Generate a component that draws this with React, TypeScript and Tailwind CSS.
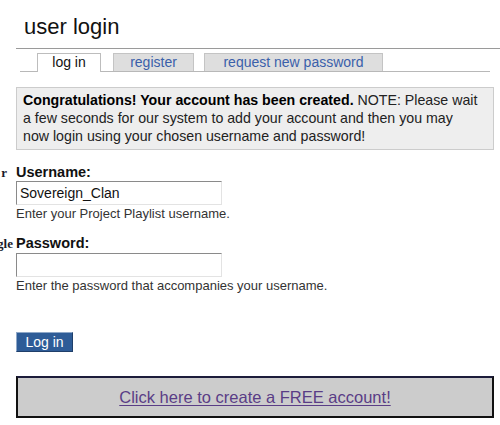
export default function App() {
  return (
    <div className="w-[500px] h-[425px] bg-white overflow-hidden font-['Liberation_Sans',Arial,sans-serif] text-black">
      {/* Title */}
      <div className="pl-[24px] pt-[14px] h-[48px] text-[22px] leading-[26px] text-[#111]">user login</div>
      <div className="ml-[16px] h-[1px] bg-[#9a9a9a]" />

      {/* Tabs */}
      <div className="ml-[20px] mr-[10px] mt-[4px] flex pl-[17px] border-b border-[#b8b8b8] h-[19px]">
        <div className="w-[64px] h-[19px] bg-white border border-b-0 border-[#bdbdbd] text-[14px] leading-[17px] text-center text-[#111]">
          log in
        </div>
        <div className="ml-[12px] w-[81px] h-[18px] bg-[#dedede] border border-b-0 border-[#c4c4c4] text-[14px] leading-[17px] text-center text-[#3a60aa]">
          register
        </div>
        <div className="ml-[10px] w-[179px] h-[18px] bg-[#dedede] border border-b-0 border-[#c4c4c4] text-[14px] leading-[17px] text-center text-[#3a60aa]">
          request new password
        </div>
      </div>

      {/* Message */}
      <div className="ml-[16px] w-[478px] mt-[15px] bg-[#eeeeee] border border-[#cccccc] px-[6px] pt-[3px] pb-[4px] text-[14.2px] leading-[18px] text-[#222]">
        <span className="font-bold text-black">Congratulations! Your account has been created.</span> NOTE: Please wait
        <br />
        a few seconds for our system to add your account and then you may
        <br />
        now login using your chosen username and password!
      </div>

      {/* Form */}
      <div className="flex mt-[14px]">
        <div className="w-[16px] shrink-0 overflow-hidden font-['Liberation_Serif',serif] text-[13px] font-bold text-[#1a1a2a]">
          <div className="h-[71px] flex justify-end pr-[9px] leading-[17px]">r</div>
          <div className="flex justify-end pr-[3px] leading-[17px] whitespace-nowrap">gle</div>
        </div>
        <div className="flex flex-col">
          <div className="text-[14.5px] leading-[17px] font-bold text-[#111]">Username:</div>
          <div className="w-[206px] h-[24px] border border-[#e3e3e3] border-t-[#8a8a8a] border-l-[#8a8a8a] pl-[3px] text-[14px] leading-[22px] text-[#111]">
            Sovereign_Clan
          </div>
          <div className="mt-[2px] text-[13px] leading-[14px] text-[#333]">Enter your Project Playlist username.</div>

          <div className="mt-[14px] text-[14.5px] leading-[17px] font-bold text-[#111]">Password:</div>
          <div className="mt-[1px] w-[206px] h-[24px] border border-[#e3e3e3] border-t-[#8a8a8a] border-l-[#8a8a8a]" />
          <div className="mt-[2px] text-[13px] leading-[14px] text-[#333]">Enter the password that accompanies your username.</div>

          <button className="mt-[39px] w-[57px] h-[20px] bg-[#2e5c97] border border-[#8fa8c8] border-r-[#1f3f6a] border-b-[#1f3f6a] text-white text-[14px] leading-[16px] font-['Liberation_Sans',Arial,sans-serif]">
            Log in
          </button>
        </div>
      </div>

      {/* Create account */}
      <div className="ml-[16px] mt-[24px] w-[478px] h-[42px] bg-[#cccccc] border-2 border-[#111] border-t-[#1c1c3a] flex items-center justify-center">
        <a className="text-[16.5px] leading-[18px] text-[#5a3d86] underline underline-offset-2 cursor-pointer">
          Click here to create a FREE account!
        </a>
      </div>
    </div>
  );
}
